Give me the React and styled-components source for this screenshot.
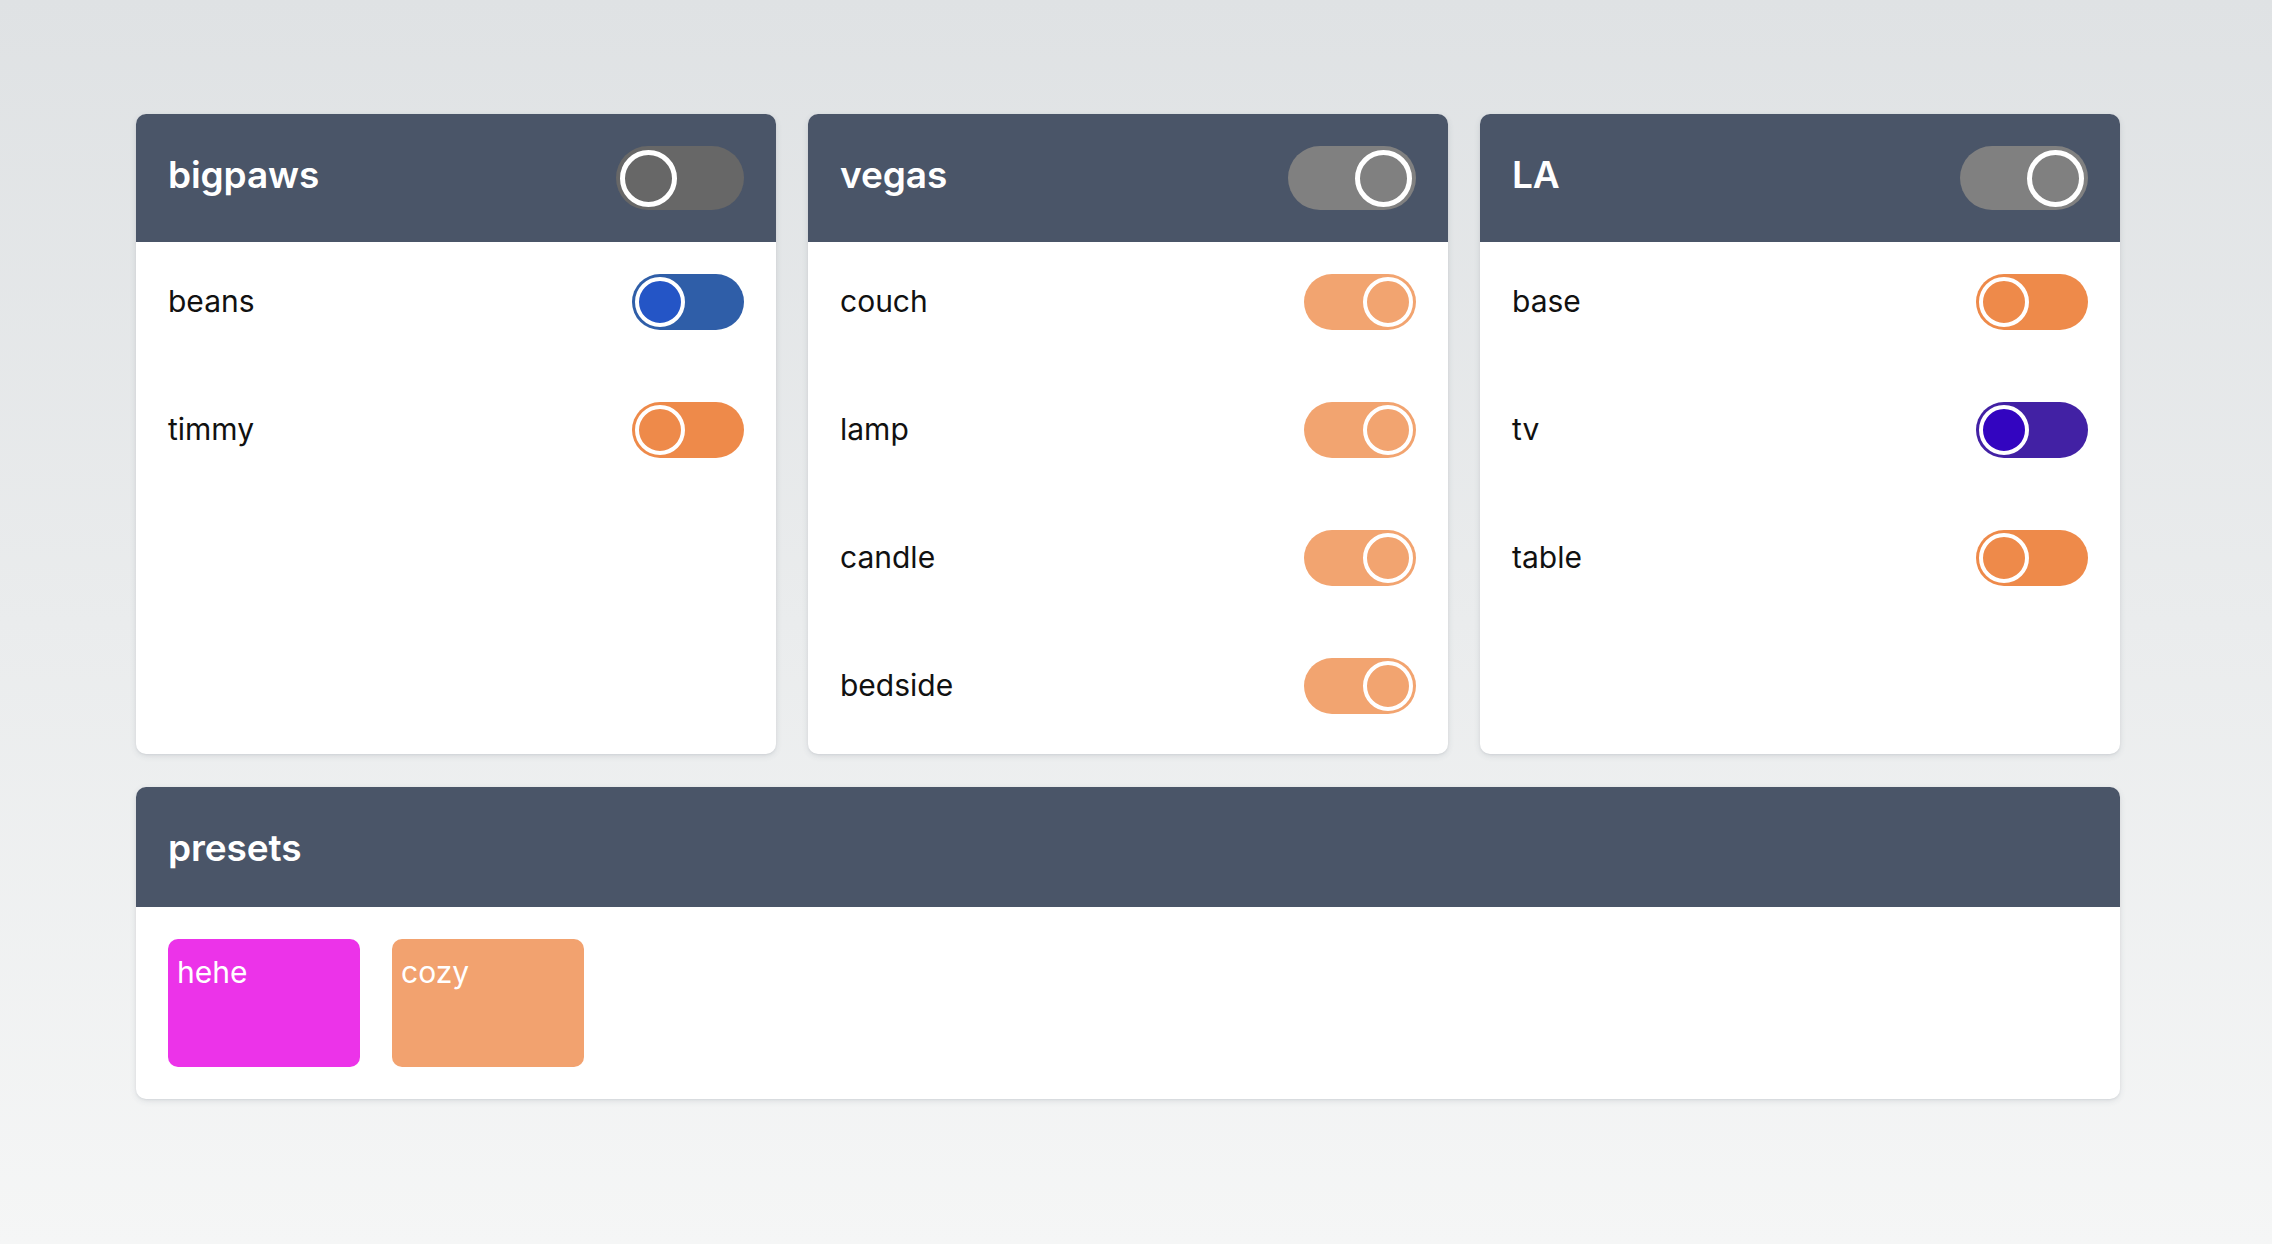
import styled, { createGlobalStyle } from "styled-components";

const GlobalStyle = createGlobalStyle`
  * { box-sizing: border-box; }
  body {
    margin: 0;
    font-family: Inter, "Noto Sans", "Liberation Sans", sans-serif;
  }
`

const Page = styled.div`
  min-height: 100vh;
  background: linear-gradient(180deg, #dfe2e4 0%, #f5f6f6 100%);
  padding: 114px 0 0 136px;
`

const Wrapper = styled.div`
  width: 1984px;
  display: flex;
  flex-direction: column;
  gap: 33px;
`

const Grid = styled.div`
  display: grid;
  grid-template-columns: repeat(3, 1fr);
  gap: 32px;
`

const Card = styled.div`
  background-color: #fff;
  border-radius: 10px;
  overflow: hidden;
  box-shadow: 0 2px 6px rgba(60, 70, 90, 0.12), 0 1px 2px rgba(60, 70, 90, 0.08);
  display: flex;
  flex-direction: column;
`

const Header = styled.div`
  background-color: #4a5568;
  padding: 32px;
  display: flex;
  align-items: center;
  justify-content: space-between;
`

const Title = styled.h2`
  margin: 0;
  color: #fff;
  font-size: 37px;
  font-weight: 600;
  line-height: 56px;
  letter-spacing: -0.1px;
  position: relative;
  top: ${p => p.raised ? '-3px' : '1px'};
`

const List = styled.div`
  padding: 32px 32px 40px;
  display: flex;
  flex-direction: column;
  gap: 72px;
`

const Row = styled.div`
  display: flex;
  align-items: center;
  justify-content: space-between;
  height: 56px;
`

const Label = styled.span`
  font-size: 30px;
  color: #111;
  position: relative;
  top: -1px;
`

const Track = styled.div`
  display: flex;
  align-items: center;
  justify-content: ${p => p.on ? 'flex-end' : 'flex-start'};
  width: ${p => p.big ? '128px' : '112px'};
  height: ${p => p.big ? '64px' : '56px'};
  padding: ${p => p.big ? '0 4px' : '0 3px'};
  border-radius: 999px;
  background-color: ${p => p.color};
  cursor: pointer;
`

const Knob = styled.div`
  width: ${p => p.big ? '57px' : '50px'};
  height: ${p => p.big ? '57px' : '50px'};
  border-radius: 50%;
  border: ${p => p.big ? '5px' : '4px'} solid #fff;
  background-color: ${p => p.color};
`

const Presets = styled.div`
  padding: 32px;
  display: flex;
  gap: 32px;
`

const Preset = styled.button`
  width: 192px;
  height: 128px;
  border: none;
  border-radius: 10px;
  background-color: ${p => p.color};
  color: #fff;
  font-family: inherit;
  font-size: 30px;
  text-align: left;
  display: flex;
  align-items: flex-start;
  padding: 15px 9px 0;
  cursor: pointer;
`

const groups = [
  {
    name: 'bigpaws',
    master: { on: false, color: '#676767' },
    lights: [
      { name: 'beans', on: false, color: '#2f5ea8', knob: '#2455c6' },
      { name: 'timmy', on: false, color: '#ee8a4a', knob: '#ee8a4a' },
    ],
  },
  {
    name: 'vegas',
    master: { on: true, color: '#808080' },
    lights: [
      { name: 'couch', on: true, color: '#f2a470', knob: '#f2a470' },
      { name: 'lamp', on: true, color: '#f2a470', knob: '#f2a470' },
      { name: 'candle', on: true, color: '#f2a470', knob: '#f2a470' },
      { name: 'bedside', on: true, color: '#f2a470', knob: '#f2a470' },
    ],
  },
  {
    name: 'LA',
    master: { on: true, color: '#808080' },
    lights: [
      { name: 'base', on: false, color: '#ee8a4a', knob: '#ee8a4a' },
      { name: 'tv', on: false, color: '#4221a4', knob: '#3305c0' },
      { name: 'table', on: false, color: '#ee8a4a', knob: '#ee8a4a' },
    ],
  },
]

const presets = [
  { name: 'hehe', color: '#ec33e9' },
  { name: 'cozy', color: '#f2a26f' },
]

function Toggle({ on, color, knob, big }) {
  return (
    <Track on={on} color={color} big={big}>
      <Knob color={knob || color} big={big} />
    </Track>
  )
}

export default function App() {
  return (
    <Page>
      <GlobalStyle />
      <Wrapper>
        <Grid>
          {groups.map(g => (
            <Card key={g.name}>
              <Header>
                <Title raised>{g.name}</Title>
                <Toggle big on={g.master.on} color={g.master.color} />
              </Header>
              <List>
                {g.lights.map(l => (
                  <Row key={l.name}>
                    <Label>{l.name}</Label>
                    <Toggle on={l.on} color={l.color} knob={l.knob} />
                  </Row>
                ))}
              </List>
            </Card>
          ))}
        </Grid>
        <Card>
          <Header>
            <Title>presets</Title>
          </Header>
          <Presets>
            {presets.map(p => (
              <Preset key={p.name} color={p.color}>{p.name}</Preset>
            ))}
          </Presets>
        </Card>
      </Wrapper>
    </Page>
  )
}
